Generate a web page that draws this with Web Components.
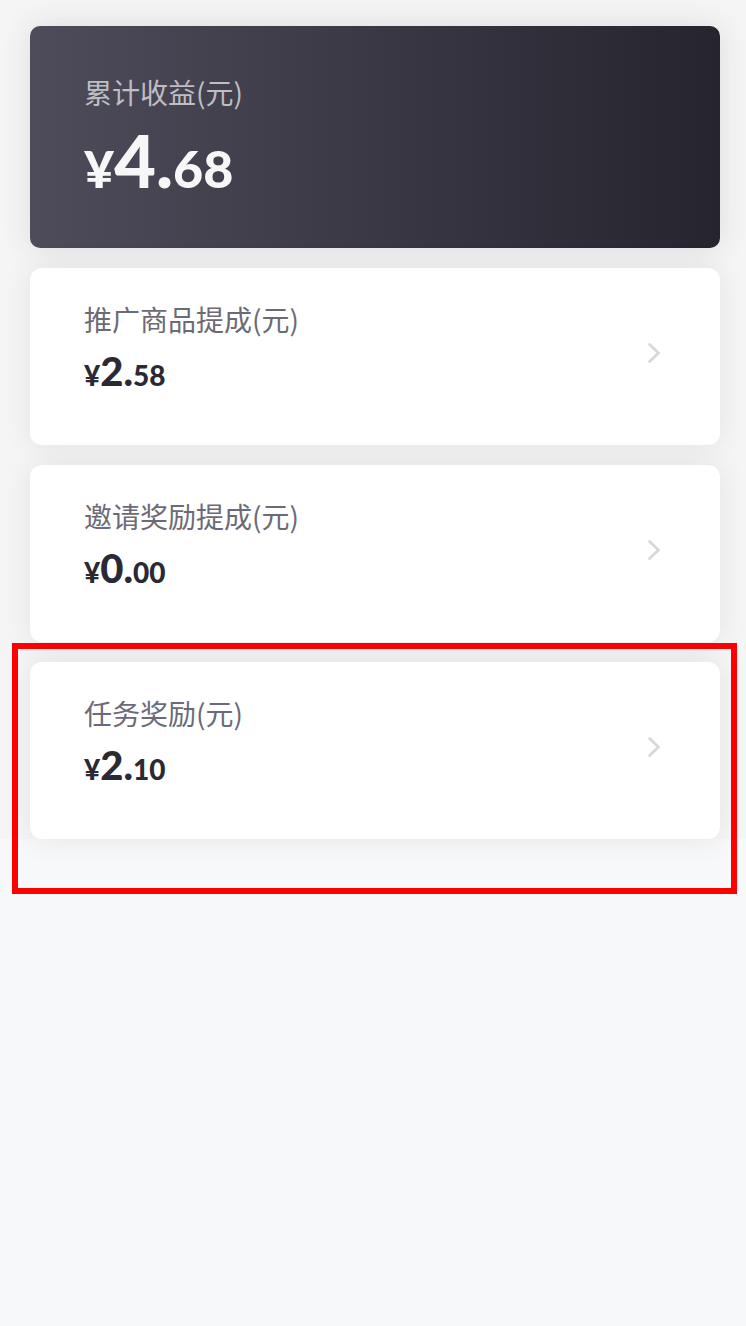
<!DOCTYPE html>
<html lang="zh-CN">
<head>
<meta charset="utf-8">
<meta name="viewport" content="width=device-width, initial-scale=1">
<title>累计收益</title>
<style>
  body {
    margin: 0;
    min-height: 100vh;
    background: #f7f8fa;
    font-family: "Noto Sans CJK SC", sans-serif;
  }
</style>
</head>
<body>
<income-page>
  <income-total value="4.68">累计收益(元)</income-total>
  <income-card value="2.58" href="#goods">推广商品提成(元)</income-card>
  <income-card value="0.00" href="#invite">邀请奖励提成(元)</income-card>
  <income-card value="2.10" href="#task" marked>任务奖励(元)</income-card>
</income-page>

<script>
(function() {
  class IncomePage extends HTMLElement {
    constructor() {
      super();
      this.attachShadow({ mode: 'open' });
      this.shadowRoot.innerHTML = `
        <style>
          :host {
            display: block;
          }
          main {
            display: flex;
            flex-direction: column;
            gap: 20px;
            padding: 26px 26px 0 30px;
            background: #f5f5f5;
          }
        </style>
        <main><slot></slot></main>
      `;
    }
  }

  // The integer part is drawn larger than the sign and the decimals
  class MoneyAmount extends HTMLElement {
    constructor() {
      super();
      this.attachShadow({ mode: 'open' });
    }

    static get observedAttributes() {
      return ['value'];
    }

    attributeChangedCallback() {
      this.render();
    }

    render() {
      const [whole, cents] = (this.getAttribute('value') || '0.00').split('.');

      this.shadowRoot.innerHTML = `
        <style>
          :host {
            display: flex;
            align-items: baseline;
            font-family: Lato, sans-serif;
            font-weight: 900;
            font-size: var(--small-size, 28px);
            line-height: 1;
            white-space: nowrap;
          }
          .whole {
            font-size: var(--whole-size, 40px);
            line-height: var(--amount-line, 48px);
          }
        </style>
        <span>¥</span><span class="whole">${whole}.</span><span>${cents}</span>
      `;
    }
  }

  class IncomeTotal extends HTMLElement {
    constructor() {
      super();
      this.attachShadow({ mode: 'open' });
    }

    connectedCallback() {
      this.shadowRoot.innerHTML = `
        <style>
          :host {
            display: block;
          }
          section {
            padding: 46px 54px 45px;
            border-radius: 10px;
            background: linear-gradient(90deg, #4e4c5a, #26242e);
            box-shadow: 0 0 30px rgba(40, 50, 70, 0.12);
            color: #f7f7f7;
          }
          .label {
            margin-bottom: 5px;
            font-size: 28px;
            line-height: 40px;
            color: #bfbec2;
          }
          money-amount {
            --small-size: 52px;
            --whole-size: 72px;
            --amount-line: 86px;
          }
        </style>
        <section>
          <div class="label"><slot></slot></div>
          <money-amount value="${this.getAttribute('value')}"></money-amount>
        </section>
      `;
    }
  }

  class IncomeCard extends HTMLElement {
    constructor() {
      super();
      this.attachShadow({ mode: 'open' });
    }

    connectedCallback() {
      this.shadowRoot.innerHTML = `
        <style>
          :host {
            display: block;
            position: relative;
          }
          a {
            display: flex;
            align-items: center;
            justify-content: space-between;
            padding: 25px 58px 32px 54px;
            border-radius: 12px;
            background: #fff;
            box-shadow: 0 0 30px rgba(0, 0, 0, 0.08);
            color: #2b2933;
            text-decoration: none;
          }
          .text {
            padding: 6px 0 18px;
          }
          .label {
            margin-bottom: 8px;
            font-size: 28px;
            line-height: 40px;
            color: #6c6a77;
          }
          svg {
            flex: none;
            width: 16px;
            height: 24px;
          }
          /* Outline laid over the card and its surroundings */
          :host([marked])::after {
            content: "";
            position: absolute;
            inset: -19px -17px -55px -18px;
            border: 6px solid #f00;
            box-sizing: border-box;
            pointer-events: none;
          }
        </style>
        <a href="${this.getAttribute('href')}">
          <div class="text">
            <div class="label"><slot></slot></div>
            <money-amount value="${this.getAttribute('value')}"></money-amount>
          </div>
          <svg viewBox="0 0 16 24" fill="none" stroke="#d8d8d8" stroke-width="2.8" aria-hidden="true">
            <path d="M3.6 3.4 12.4 12 3.6 20.6" stroke-linecap="round"/>
          </svg>
        </a>
      `;
    }
  }

  customElements.define('money-amount', MoneyAmount);
  customElements.define('income-total', IncomeTotal);
  customElements.define('income-card', IncomeCard);
  customElements.define('income-page', IncomePage);
})();
</script>
</body>
</html>
